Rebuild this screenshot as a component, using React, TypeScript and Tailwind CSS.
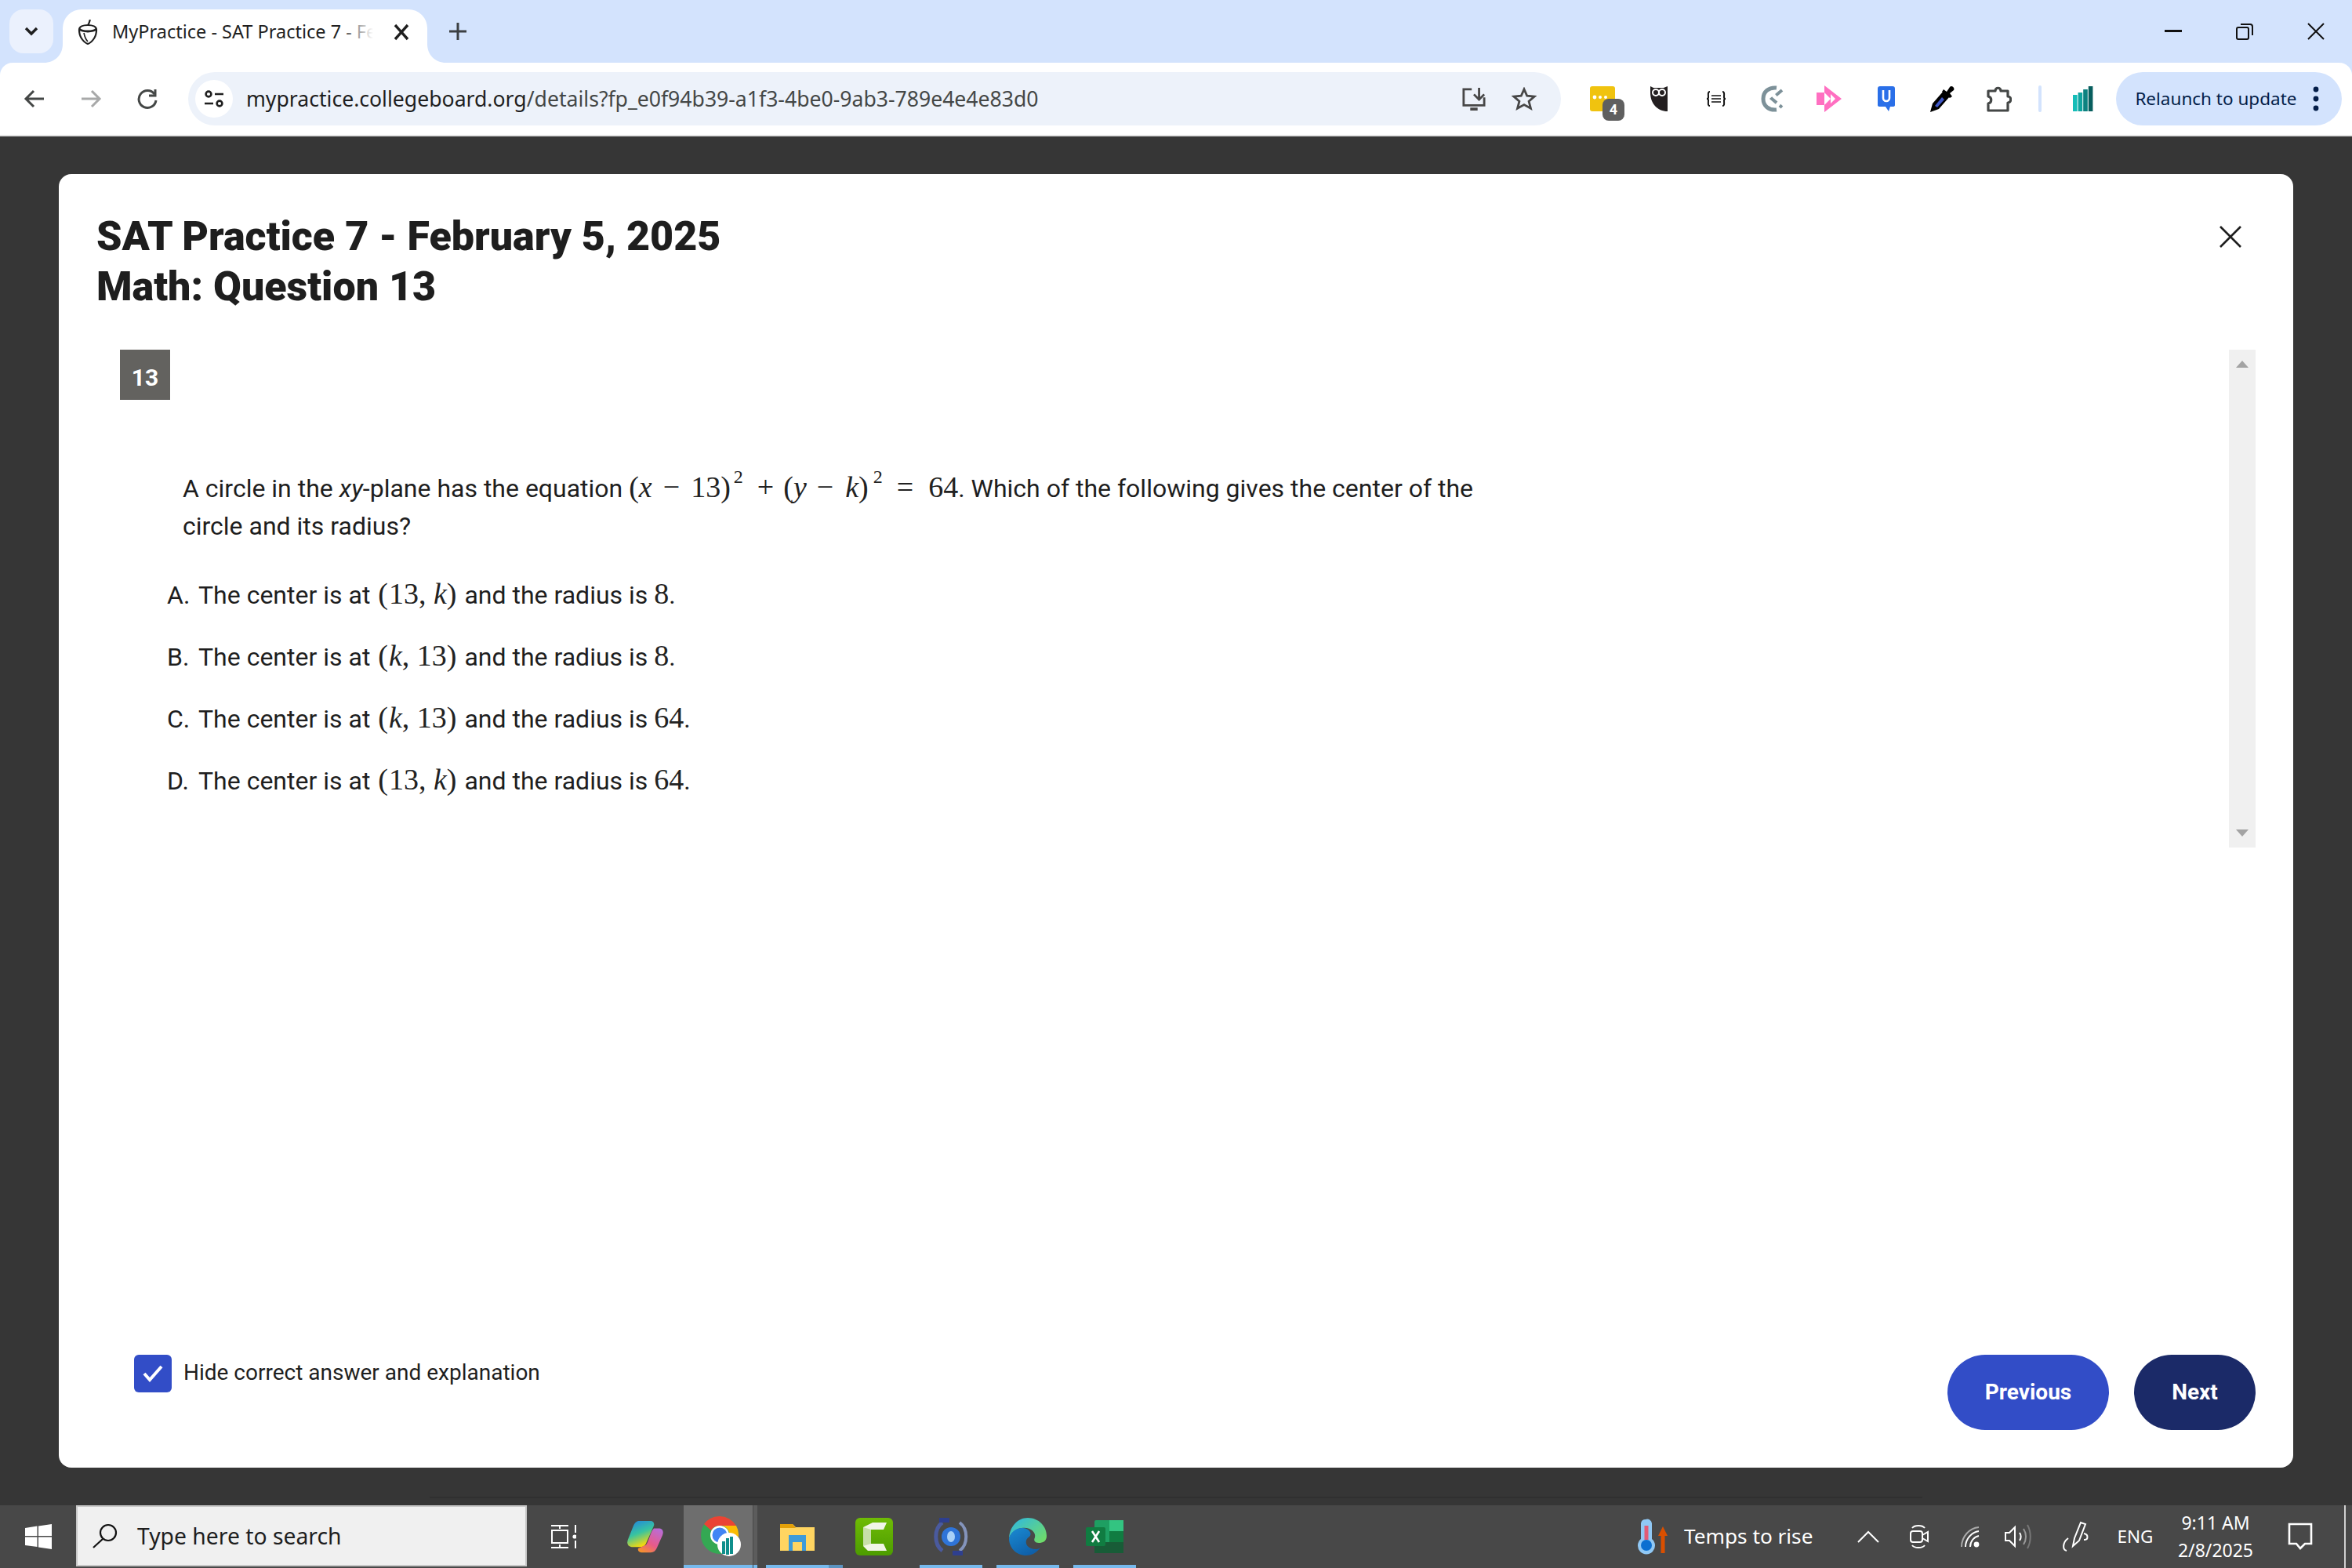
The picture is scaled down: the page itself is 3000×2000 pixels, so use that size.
import React from "react";

const roboto = "font-['Roboto',sans-serif]";
const ui = "font-['Noto_Sans','Open_Sans',sans-serif]";
const mathFont = "font-['Liberation_Serif',serif]";

function V({ children }: { children: React.ReactNode }) {
  return <span className="italic">{children}</span>;
}
function M({ children }: { children: React.ReactNode }) {
  return <span className={`${mathFont} text-[38px] leading-[1] text-[#222]`}>{children}</span>;
}
function Sup({ className }: { className: string }) {
  return <span className={`relative -top-[18px] text-[24px] leading-[0] ${className}`}>2</span>;
}
function Op({ children, className }: { children: string; className: string }) {
  return <span className={className}>{children}</span>;
}

function Option({ letter, a, b, r }: { letter: string; a: React.ReactNode; b: React.ReactNode; r: string }) {
  return (
    <div className="flex h-[79px] items-center">
      <span className="w-[40px]">{letter}.</span>
      <span>
        The center is at{" "}
        <M>
          <span className="ml-[2px] mr-[1px]">(</span>
          {a}, {b}
          <span className="mr-[2px]">)</span>
        </M>{" "}
        and the radius is <M>{r}</M>.
      </span>
    </div>
  );
}

function Acorn() {
  return (
    <svg width="26" height="32" viewBox="0 0 26 32" fill="none" stroke="#1f1f1f" strokeWidth="2.2">
      <path d="M13 7 C15 5 15 2 16 0" />
      <path d="M2 13 C2 9 7 7 13 7 C19 7 24 9 24 13 C24 17 23 21 21 24 C19 27 16 30 13 31 C10 30 7 27 5 24 C3 21 2 17 2 13 Z" />
      <path d="M2 12 C7 16 19 16 24 12" strokeWidth="2.8" />
      <path d="M8 17 C9 22 11 26 13 28" strokeWidth="1.6" />
    </svg>
  );
}

function TabCorner({ flip }: { flip?: boolean }) {
  return (
    <svg width="24" height="24" viewBox="0 0 24 24" className={`absolute bottom-0 ${flip ? "-right-[24px] -scale-x-100" : "-left-[24px]"}`}>
      <path d="M24 0 V24 H0 C14 24 24 14 24 0 Z" fill="#ffffff" />
    </svg>
  );
}

function ExtSlot({ children }: { children: React.ReactNode }) {
  return <div className="relative flex h-[68px] w-[72.3px] shrink-0 items-center justify-center">{children}</div>;
}

function TaskSlot({ children, line, lineW }: { children: React.ReactNode; line?: boolean; lineW?: boolean }) {
  return (
    <div className="relative flex h-[80px] w-[80px] shrink-0 items-center justify-center">
      {children}
      {line && <div className="absolute inset-x-0 bottom-0 h-[4px] bg-[#76b9ed]" />}
      {lineW && <div className="absolute -right-[18px] bottom-0 h-[4px] w-[18px] bg-[#5b93c0]" />}
    </div>
  );
}

export default function App() {
  return (
    <div className={`flex h-[2000px] w-[3000px] flex-col overflow-hidden bg-[#363636] ${roboto}`}>
      {/* Tab strip */}
      <div className="flex h-[80px] shrink-0 items-start bg-[#d3e3fd] pt-[12px]">
        <div className="ml-[12px] flex h-[56px] w-[56px] items-center justify-center rounded-[18px] bg-[#ebf1fd]">
          <svg width="20" height="14" viewBox="0 0 20 14" fill="none" stroke="#1f1f1f" strokeWidth="3.4">
            <path d="M3 3 L10 10 L17 3" />
          </svg>
        </div>
        <div className="relative ml-[12px] flex h-[68px] w-[465px] items-center rounded-t-[24px] bg-white pb-[10px] pl-[19px]">
          <TabCorner />
          <TabCorner flip />
          <Acorn />
          <div className={`relative ml-[18px] w-[333px] overflow-hidden whitespace-nowrap text-[23.5px] text-[#1f1f1f] ${ui}`}>
            MyPractice - SAT Practice 7 - February 5, 2025
            <div className="absolute inset-y-0 right-0 w-[44px] bg-gradient-to-r from-transparent to-white" />
          </div>
          <svg className="absolute left-[422px] top-[18px]" width="20" height="22" viewBox="0 0 20 22" stroke="#1f1f1f" strokeWidth="3.4">
            <path d="M2 2 L18 20 M18 2 L2 20" />
          </svg>
        </div>
        <svg className="ml-[27px] mt-[16px]" width="24" height="24" viewBox="0 0 24 24" stroke="#3c4043" strokeWidth="3">
          <path d="M12 1 V23 M1 12 H23" />
        </svg>
        <div className="ml-auto flex h-[56px] items-center">
          <div className="flex w-[91px] items-center justify-center">
            <svg width="22" height="4"><rect width="22" height="3" fill="#111" /></svg>
          </div>
          <div className="flex w-[91px] items-center justify-center">
            <svg width="22" height="22" viewBox="0 0 22 22" fill="none" stroke="#111" strokeWidth="2">
              <rect x="1" y="6" width="15" height="15" rx="2" />
              <path d="M6 2 H18 Q21 2 21 5 V16" />
            </svg>
          </div>
          <div className="mr-[1px] flex w-[91px] items-center justify-center">
            <svg width="22" height="22" viewBox="0 0 22 22" stroke="#111" strokeWidth="2">
              <path d="M1 1 L21 21 M21 1 L1 21" />
            </svg>
          </div>
        </div>
      </div>

      {/* Toolbar */}
      <div className="flex h-[94px] shrink-0 bg-[#d3e3fd]">
        <div className="flex h-[94px] w-full items-start rounded-t-[16px] border-b-2 border-[#e3e3e3] bg-white pl-[8px] pt-[12px]">
          <div className="flex h-[68px] w-[72px] items-center justify-center">
            <svg width="28" height="28" viewBox="0 0 28 28" fill="none" stroke="#444746" strokeWidth="3">
              <path d="M26 14 H3 M13 4 L3 14 L13 24" />
            </svg>
          </div>
          <div className="flex h-[68px] w-[72px] items-center justify-center">
            <svg width="28" height="28" viewBox="0 0 28 28" fill="none" stroke="#a8a9a9" strokeWidth="3">
              <path d="M2 14 H25 M15 4 L25 14 L15 24" />
            </svg>
          </div>
          <div className="flex h-[68px] w-[72px] items-center justify-center">
            <svg width="28" height="28" viewBox="0 0 28 28" fill="none" stroke="#444746" strokeWidth="3">
              <path d="M23 8 A11 11 0 1 0 25 16" />
              <path d="M24 2 V10 H16" />
            </svg>
          </div>
          {/* Address bar */}
          <div className="ml-[16px] flex h-[68px] w-[1751px] items-center rounded-[34px] bg-[#edf2fa] pl-[9px]">
            <div className="flex h-[48px] w-[48px] items-center justify-center rounded-full bg-white">
              <svg width="26" height="24" viewBox="0 0 26 24" fill="none" stroke="#1f1f1f" strokeWidth="2.6">
                <circle cx="6" cy="6" r="3.4" />
                <path d="M14 6 H25 M1 18 H12" />
                <circle cx="20" cy="18" r="3.4" />
              </svg>
            </div>
            <div className={`ml-[17px] translate-y-[1px] whitespace-nowrap text-[26.6px] text-[#444746] ${ui}`}>
              <span className="text-[#1f1f1f]">mypractice.collegeboard.org</span>/details?fp_e0f94b39-a1f3-4be0-9ab3-789e4e4e83d0
            </div>
            <div className="ml-auto flex items-center pr-[31px]">
              <svg width="32" height="30" viewBox="0 0 34 32" fill="none" stroke="#474747" strokeWidth="3">
                <path d="M14 3 H3 V25 H31 V14" />
                <path d="M12 30 H22" strokeWidth="4" />
                <path d="M24 1 V16 M17 10 L24 17 L31 10" />
              </svg>
              <svg className="ml-[32px]" width="32" height="30" viewBox="0 0 32 32" fill="none" stroke="#474747" strokeWidth="3">
                <path d="M16 3 L20 12 L30 13 L22.5 19.5 L25 29 L16 24 L7 29 L9.5 19.5 L2 13 L12 12 Z" />
              </svg>
            </div>
          </div>
          {/* Extensions */}
          <div className="ml-[17px] flex items-center">
            <ExtSlot>
              <svg width="32" height="32" viewBox="0 0 32 32">
                <rect width="32" height="32" rx="3" fill="#f0c30f" />
                <circle cx="6" cy="14" r="2.4" fill="#fff" />
                <circle cx="13" cy="14" r="2" fill="#fff" />
                <circle cx="20" cy="14" r="2" fill="#fff" />
              </svg>
              <div className="absolute left-[36px] top-[34px] flex h-[28px] w-[28px] items-center justify-center rounded-[8px] bg-[#5f5f5f] text-[18px] font-bold leading-none text-white">
                4
              </div>
            </ExtSlot>
            <ExtSlot>
              <svg width="24" height="32" viewBox="0 0 24 32">
                <path d="M1 0 L5 2 H18 L23 0 V32 C10 32 1 22 1 8 Z" fill="#231f20" />
                <circle cx="8" cy="8" r="4" fill="none" stroke="#fff" strokeWidth="2" />
                <circle cx="16" cy="8" r="4" fill="none" stroke="#fff" strokeWidth="2" />
              </svg>
            </ExtSlot>
            <ExtSlot>
              <svg width="26" height="20" viewBox="0 0 26 20" fill="none" stroke="#111" strokeWidth="2">
                <path d="M5 1 C2 1 3 5 3 8 C3 9 2 10 1 10 C2 10 3 11 3 12 C3 15 2 19 5 19" />
                <path d="M21 1 C24 1 23 5 23 8 C23 9 24 10 25 10 C24 10 23 11 23 12 C23 15 24 19 21 19" />
                <path d="M7 6 H19 M7 10 H19 M7 14 H19" strokeWidth="1.6" />
              </svg>
            </ExtSlot>
            <ExtSlot>
              <svg width="30" height="34" viewBox="0 0 30 34" fill="none" stroke="#7d9199" strokeWidth="5">
                <path d="M20 3 C10 2 3 8 3 17 C3 26 10 32 20 31" />
                <path d="M27 6 L14 17 L27 28" strokeWidth="4" strokeDasharray="10 5" />
              </svg>
            </ExtSlot>
            <ExtSlot>
              <svg width="32" height="34" viewBox="0 0 32 34">
                <path d="M10 0 L32 17 L10 34 V25 H0 V9 H10 Z" fill="#ff6fc1" />
                <path d="M10 9 L18 17 L10 25 Z M18 11 L24 17 L18 23 Z" fill="#fff" />
              </svg>
            </ExtSlot>
            <ExtSlot>
              <svg width="24" height="34" viewBox="0 0 24 34">
                <path d="M4 1 H20 Q23 1 23 4 V25 Q23 27 20 27 H17 L15 33 L11 27 H4 Q1 27 1 25 V4 Q1 1 4 1 Z" fill="#2a6fe8" />
                <path d="M8 6 V16 A4 4 0 0 0 16 16 V6" fill="none" stroke="#fff" strokeWidth="2.6" />
              </svg>
            </ExtSlot>
            <ExtSlot>
              <svg width="32" height="34" viewBox="0 0 32 34">
                <path d="M0 34 L3 23 L17 7 L25 14 L11 30 Z" fill="#000" />
                <path d="M6 26 L15 15 L18 18 L9 28 Z" fill="#3f57c6" />
                <path d="M17 5 L21 8 L25 2 C27 -1 32 3 30 6 L25 10 L28 14 L25 16 L15 8 Z" fill="#000" />
              </svg>
            </ExtSlot>
            <ExtSlot>
              <svg width="32" height="34" viewBox="0 0 32 34" fill="none" stroke="#444746" strokeWidth="3.2">
                <path d="M2 7 H11 C11 2 18 2 18 7 H27 V14 C32 14 32 22 27 22 V32 H2 V23 C7 22 7 15 2 14 Z" strokeLinejoin="round" />
              </svg>
            </ExtSlot>
          </div>
          <div className="ml-[14px] mt-[17px] h-[34px] w-[4px] rounded-full bg-[#d3e3fd]" />
          <div className="flex h-[68px] w-[104px] items-center justify-center pl-[2px]">
            <svg width="26" height="32" viewBox="0 0 26 32">
              <rect x="0" y="11" width="5.6" height="21" fill="#15bdb8" />
              <rect x="6.6" y="8" width="5.6" height="24" fill="#0fa39f" />
              <rect x="13.2" y="4" width="5.6" height="28" fill="#0b8280" />
              <rect x="19.8" y="0" width="5.6" height="32" fill="#075e5e" />
            </svg>
          </div>
          <div className="ml-[-9px] flex h-[68px] w-[288px] items-center rounded-[34px] bg-[#d3e3fd] pl-[24px] text-[#041e49]">
            <span className={`w-[205px] whitespace-nowrap text-[22.5px] ${ui}`}>Relaunch to update</span>
            <svg className="ml-[22px]" width="8" height="32" viewBox="0 0 8 32" fill="#041e49">
              <circle cx="4" cy="4" r="3.4" />
              <circle cx="4" cy="16" r="3.4" />
              <circle cx="4" cy="28" r="3.4" />
            </svg>
          </div>
        </div>
      </div>

      {/* Page */}
      <div className="flex min-h-0 flex-1 flex-col px-[75px] pt-[48px]">
        <div className="flex min-h-0 flex-1 flex-col rounded-[16px] bg-white px-[48px] pb-[48px] pt-[48px] text-[#1e1e1e]">
          <div className="flex items-start justify-between">
            <h1 className="text-[52px] font-black leading-[64px]">
              SAT Practice 7 - February 5, 2025
              <br />
              Math: Question 13
            </h1>
            <div className="flex h-[64px] w-[64px] items-center justify-center">
              <svg width="28" height="28" viewBox="0 0 28 28" stroke="#1e1e1e" strokeWidth="2.6">
                <path d="M1 1 L27 27 M27 1 L1 27" />
              </svg>
            </div>
          </div>

          <div className="mt-[48px] flex h-[635px]">
            <div className="min-w-0 flex-1 pl-[30px] text-[32px]">
              <div className="flex h-[64px] w-[64px] items-center justify-center bg-[#63625f] pt-[6px] text-[30px] font-bold text-white">
                13
              </div>
              <p className="ml-[80px] mt-[89px] max-w-[1660px] leading-[48px]">
                A circle in the <em>xy</em>-plane has the equation{" "}
                <M>
                  (<V>x</V>
                  <Op className="ml-[14px] mr-[14px]">−</Op>13)
                  <Sup className="ml-[4px]" />
                  <Op className="ml-[18px] mr-[12px]">+</Op>(<V>y</V>
                  <Op className="ml-[13px] mr-[15px]">−</Op>
                  <V>k</V>)
                  <Sup className="ml-[6px]" />
                  <Op className="ml-[18px] mr-[19px]">=</Op>64
                </M>
                . Which of the following gives the center of the circle and its radius?
              </p>
              <div className="ml-[60px] mt-[24px]">
                <Option letter="A" a="13" b={<V>k</V>} r="8" />
                <Option letter="B" a={<V>k</V>} b="13" r="8" />
                <Option letter="C" a={<V>k</V>} b="13" r="64" />
                <Option letter="D" a="13" b={<V>k</V>} r="64" />
              </div>
            </div>
            <div className="flex w-[34px] shrink-0 flex-col items-center justify-between bg-[#f0f0f0] py-[14px]">
              <svg width="16" height="9" viewBox="0 0 16 9"><path d="M8 0 L16 9 H0 Z" fill="#a3a3a3" /></svg>
              <svg width="16" height="9" viewBox="0 0 16 9"><path d="M0 0 H16 L8 9 Z" fill="#a3a3a3" /></svg>
            </div>
          </div>

          <div className="mt-auto flex items-start justify-between">
            <label className="ml-[48px] flex h-[48px] items-center text-[28px]">
              <span className="flex h-[48px] w-[48px] items-center justify-center rounded-[6px] bg-[#324dc7]">
                <svg width="26" height="22" viewBox="0 0 26 22" fill="none" stroke="#fff" strokeWidth="4">
                  <path d="M2 11 L9 19 L24 2" />
                </svg>
              </span>
              <span className="ml-[15px] -translate-y-[1px]">Hide correct answer and explanation</span>
            </label>
            <div className="flex gap-[32px]">
              <button className="h-[96px] w-[206px] rounded-[48px] bg-[#324dc7] text-[28px] font-bold text-white">Previous</button>
              <button className="h-[96px] w-[155px] rounded-[48px] bg-[#1b2a68] text-[28px] font-bold text-white">Next</button>
            </div>
          </div>
        </div>
        <div className="mx-[473px] mb-[9px] mt-[37px] h-[2px] shrink-0 bg-[#303030]" />
      </div>

      {/* Taskbar */}
      <div className={`flex h-[80px] shrink-0 bg-[#484848] ${ui}`}>
        <div className="flex w-[97px] items-center justify-center">
          <svg width="34" height="32" viewBox="0 0 34 32" fill="#fff">
            <path d="M0 5 L15.5 2.6 V15 H0 Z M17 2.4 L34 0 V15 H17 Z M0 16.6 H15.5 V29 L0 27 Z M17 16.6 H34 V32 L17 29.4 Z" />
          </svg>
        </div>
        <div className="flex h-[78px] w-[575px] items-center border-2 border-[#c8c8c8] bg-[#f0f0f0] pl-[18px] text-[28.3px] text-[#1e1e1e]">
          <svg width="34" height="32" viewBox="0 0 34 32" fill="none" stroke="#111" strokeWidth="2.2">
            <circle cx="21" cy="12" r="10" />
            <path d="M14 20 L2 31" />
          </svg>
          <span className="ml-[24px]">Type here to search</span>
        </div>
        <div className="flex w-[94px] items-center justify-center">
          <svg width="32" height="30" viewBox="0 0 32 30" fill="none" stroke="#fff" strokeWidth="2">
            <path d="M0 1 H22 M0 29 H22 M11 1 V5 M11 25 V29 M31 0 V10 M31 20 V30" />
            <rect x="1" y="7" width="20" height="16" />
            <circle cx="30" cy="15" r="2.6" fill="#fff" stroke="none" />
          </svg>
        </div>
        <div className="ml-[8px] flex w-[98px] items-center justify-center">
          <svg width="46" height="42" viewBox="0 0 46 48" preserveAspectRatio="none">
            <defs>
              <linearGradient id="cp1" x1="0" y1="0" x2="0.4" y2="1">
                <stop offset="0" stopColor="#1f7fe6" />
                <stop offset="0.55" stopColor="#38c4a0" />
                <stop offset="1" stopColor="#f2d80f" />
              </linearGradient>
              <linearGradient id="cp2" x1="0.8" y1="0" x2="0.2" y2="1">
                <stop offset="0" stopColor="#b96dd7" />
                <stop offset="0.6" stopColor="#e85a8a" />
                <stop offset="1" stopColor="#f5912e" />
              </linearGradient>
            </defs>
            <path d="M16 1 H30 C33 1 35 4 34 8 L24 34 C22 38 20 39 16 39 H6 C1 39 -1 34 1 28 L8 8 C10 3 12 1 16 1 Z" fill="url(#cp1)" />
            <path d="M34 12 H40 C45 12 47 16 45 22 L38 40 C36 45 34 47 30 47 H18 C15 47 13 44 14 41 L24 36 C28 30 30 16 34 12 Z" fill="url(#cp2)" />
          </svg>
        </div>
        <div className="relative flex w-[88px] items-center justify-center bg-[#6e6e6e] pl-[8px]">
          <svg width="52" height="52" viewBox="0 0 52 52">
            <circle cx="24" cy="24" r="24" fill="#34a853" />
            <path d="M24 0 A24 24 0 0 1 45 12 H24 A12 12 0 0 0 13 18 L4 10 A24 24 0 0 1 24 0 Z" fill="#ea4335" />
            <path d="M45 12 A24 24 0 0 1 30 47 L35 30 A12 12 0 0 0 24 12 Z" fill="#fbbc04" />
            <circle cx="24" cy="24" r="12" fill="#fff" />
            <circle cx="24" cy="24" r="9.5" fill="#4285f4" />
            <circle cx="36" cy="36" r="15" fill="#fff" />
            <path d="M27 32 H31 V48 H27 Z M32 28 H36 V49 H32 Z M37 26 H41 V48 H37 Z" fill="#0f8f8c" />
          </svg>
          <div className="absolute inset-x-0 bottom-0 h-[4px] bg-[#76b9ed]" />
        </div>
        <div className="relative ml-[1px] w-[5px] bg-[#5c5c5c]">
          <div className="absolute inset-x-0 bottom-0 h-[4px] bg-[#76b9ed]" />
        </div>
        <div className="ml-[11px] flex gap-[18px]">
          <TaskSlot line lineW>
            <svg width="48" height="48" viewBox="0 0 48 48">
              <path d="M2 8 H18 L22 12 H46 V42 H2 Z" fill="#ffd561" />
              <path d="M2 8 H18 L22 13 H2 Z" fill="#e3a008" />
              <path d="M13 22 H35 V42 H30 V31 H18 V42 H13 Z" fill="#3d9bd9" />
            </svg>
          </TaskSlot>
          <TaskSlot>
            <svg width="48" height="48" viewBox="0 0 48 48">
              <defs>
                <linearGradient id="cam" x1="0" y1="0" x2="0" y2="1">
                  <stop offset="0" stopColor="#6fbb05" />
                  <stop offset="1" stopColor="#4c9c00" />
                </linearGradient>
              </defs>
              <rect width="48" height="48" rx="6" fill="url(#cam)" />
              <path d="M10 12 L22 6 H40 L36 15 H20 V33 H36 L40 42 H16 L10 36 Z" fill="#f1f5e6" />
              <path d="M10 12 L20 15 V33 L10 36 Z" fill="#c7dfa8" />
            </svg>
          </TaskSlot>
          <TaskSlot line>
            <svg width="48" height="48" viewBox="0 0 48 48" fill="none">
              <path d="M13 6 C2 14 2 34 13 42" stroke="#4a5a9e" strokeWidth="5" />
              <path d="M35 6 C46 14 46 34 35 42" stroke="#8494bc" strokeWidth="4" />
              <rect x="9" y="0" width="13" height="6" fill="#2e3f8f" />
              <rect x="26" y="42" width="13" height="6" fill="#2e3f8f" />
              <ellipse cx="24" cy="24" rx="12" ry="12" fill="#2f74d8" />
              <ellipse cx="24" cy="24" rx="5" ry="7" fill="#a9d0f7" />
            </svg>
          </TaskSlot>
          <TaskSlot line>
            <svg width="48" height="48" viewBox="0 0 48 48">
              <defs>
                <linearGradient id="ed1" x1="0" y1="0" x2="1" y2="0.8">
                  <stop offset="0" stopColor="#2bb5e8" />
                  <stop offset="1" stopColor="#6fdc6a" />
                </linearGradient>
                <linearGradient id="ed2" x1="0" y1="0" x2="0.6" y2="1">
                  <stop offset="0" stopColor="#1a8ad2" />
                  <stop offset="1" stopColor="#0f5fa8" />
                </linearGradient>
              </defs>
              <path d="M24 0 C38 0 48 11 48 23 C48 30 43 32 38 32 C33 32 31 29 33 25 C35 18 26 11 16 13 C8 14 2 20 0 26 C1 11 11 0 24 0 Z" fill="url(#ed1)" />
              <path d="M0 26 C2 18 10 12 18 13 C26 14 30 20 26 24 C20 27 20 36 28 39 C33 41 38 40 40 38 C35 45 28 48 22 48 C9 48 0 38 0 26 Z" fill="url(#ed2)" />
            </svg>
          </TaskSlot>
          <TaskSlot line>
            <svg width="48" height="48" viewBox="0 0 48 48">
              <rect x="11" y="3" width="37" height="42" rx="2" fill="#1e9f62" />
              <rect x="30" y="3" width="18" height="14" fill="#33c481" />
              <rect x="30" y="17" width="18" height="14" fill="#21a366" />
              <rect x="11" y="31" width="37" height="14" fill="#185c37" />
              <rect x="30" y="17" width="18" height="14" fill="#107c41" />
              <rect x="0" y="12" width="25" height="24" rx="2" fill="#107c41" />
              <path d="M8 17 L17 31 M17 17 L8 31" stroke="#fff" strokeWidth="2.6" />
            </svg>
          </TaskSlot>
        </div>

        <div className="ml-auto flex items-center text-white">
          <div className="flex w-[46px] items-center justify-center">
            <svg width="38" height="46" viewBox="0 0 38 46">
              <path d="M10 1 A6 6 0 0 1 18 6 V26 A11 11 0 1 1 4 26 V6 A6 6 0 0 1 10 1 Z" fill="#90c8f5" />
              <rect x="8.5" y="9" width="5" height="18" fill="#e25a75" />
              <circle cx="11" cy="34" r="7" fill="#0b6fd1" />
              <path d="M32 10 L38 22 H34.5 V44 H29.5 V22 H26 Z" fill="#d94f00" />
            </svg>
          </div>
          <span className="ml-[17px] w-[163px] whitespace-nowrap text-[26.2px]">Temps to rise</span>
          <div className="ml-[42px] flex w-[60px] items-center justify-center">
            <svg width="28" height="16" viewBox="0 0 28 16" fill="none" stroke="#fff" strokeWidth="2">
              <path d="M1 15 L14 2 L27 15" />
            </svg>
          </div>
          <div className="flex w-[70px] items-center justify-center">
            <svg width="24" height="32" viewBox="0 0 24 32" fill="none" stroke="#fff" strokeWidth="2">
              <path d="M3 5 C6 1 16 1 19 5 M3 27 C6 31 16 31 19 27" />
              <rect x="1" y="9" width="15" height="14" rx="3" />
              <path d="M16 14 L23 10 V22 L16 18" />
            </svg>
          </div>
          <div className="flex w-[60px] items-center justify-center">
            <svg width="26" height="28" viewBox="0 0 26 28" fill="none" stroke="#fff" strokeWidth="2">
              <path d="M2 27 C2 14 12 3 24 2" stroke="#aaa" />
              <path d="M7 27 C7 17 15 8 24 7" />
              <path d="M13 27 C13 20 18 14 24 13" />
              <circle cx="21" cy="24" r="3.4" fill="#fff" stroke="none" />
            </svg>
          </div>
          <div className="flex w-[62px] items-center justify-center">
            <svg width="34" height="34" viewBox="0 0 34 34" fill="none" stroke="#fff" strokeWidth="2">
              <path d="M1 12 H6 L13 5 V29 L6 22 H1 Z" />
              <path d="M19 12 C21 15 21 19 19 22" />
              <path d="M24 7 C28 13 28 21 24 27" stroke="#999" />
              <path d="M29 2 C34 11 34 23 29 32" stroke="#777" />
            </svg>
          </div>
          <div className="flex w-[84px] items-center justify-center">
            <svg width="34" height="40" viewBox="0 0 34 40" fill="none" stroke="#fff" strokeWidth="2">
              <path d="M14 32 L16 22 L24 2 L30 4 L22 25 Z" />
              <path d="M8 22 C0 28 1 37 6 38 M28 16 C34 17 34 24 28 24" />
            </svg>
          </div>
          <span className="w-[69px] text-center text-[22.5px]">ENG</span>
          <div className="flex w-[136px] flex-col items-center text-[23px] leading-[35px]">
            <span>9:11 AM</span>
            <span>2/8/2025</span>
          </div>
          <div className="flex w-[80px] items-center justify-center">
            <svg width="32" height="36" viewBox="0 0 32 36" fill="none" stroke="#fff" strokeWidth="2.6">
              <path d="M2 2 H30 V27 H22 L16 33 L11 27 H2 Z" />
            </svg>
          </div>
          <div className="ml-[16px] h-[80px] w-[2px] bg-[#d0d0d0]" />
          <div className="w-[8px]" />
        </div>
      </div>
    </div>
  );
}
